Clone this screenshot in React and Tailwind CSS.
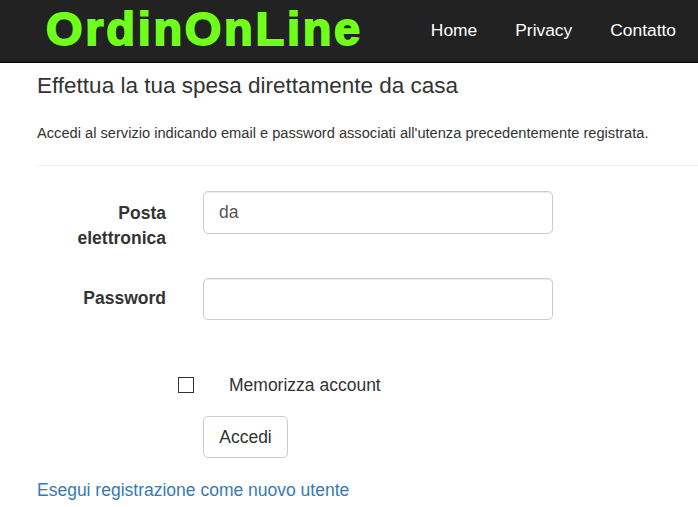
export default function App() {
  return (
    <div className="h-[507px] w-[698px] overflow-hidden bg-white text-[#333] font-['Liberation_Sans',Arial,sans-serif]">
      <nav className="flex h-[63px] items-center justify-between border-b border-[#080808] bg-[#222222] pl-[46px] pr-[22px]">
        <div className="text-[47px] font-bold leading-none tracking-[2.7px] text-[#6fff1a] pb-[6px] [-webkit-text-stroke:1.8px_#6fff1a]">OrdinOnLine</div>
        <div className="flex gap-[38px] pb-[2px] text-[17.4px] text-white">
          <span>Home</span>
          <span>Privacy</span>
          <span>Contatto</span>
        </div>
      </nav>
      <main className="pl-[37px]">
        <h2 className="mt-[9px] text-[22.5px] leading-[28px]">Effettua la tua spesa direttamente da casa</h2>
        <p className="mt-[23px] text-[14.65px] leading-[20px] whitespace-nowrap">Accedi al servizio indicando email e password associati all'utenza precedentemente registrata.</p>
        <hr className="mt-[22px] border-t border-[#eeeeee]" />
        <div className="mt-[25px] flex">
          <label className="w-[129px] pt-[9.5px] text-right text-[17.5px] font-bold leading-[25.5px]">Posta elettronica</label>
          <div className="ml-[37px] flex h-[43px] w-[350px] items-center rounded-[5px] border border-[#cccccc] px-[15px] text-[17.5px] text-[#555] shadow-[inset_0_1px_1px_rgba(0,0,0,0.075)]">da</div>
        </div>
        <div className="mt-[26.5px] flex">
          <label className="w-[129px] pt-[8px] text-right text-[17.5px] font-bold leading-[25px]">Password</label>
          <div className="ml-[37px] h-[42px] w-[350px] rounded-[5px] border border-[#cccccc] shadow-[inset_0_1px_1px_rgba(0,0,0,0.075)]"></div>
        </div>
        <div className="mt-[54px] flex items-center">
          <span className="ml-[141px] h-[16px] w-[16px] border border-[#333]"></span>
          <span className="ml-[35px] text-[17.5px] leading-[22px]">Memorizza account</span>
        </div>
        <button className="ml-[166px] mt-[20px] block h-[42px] w-[85px] rounded-[5px] border border-[#cccccc] bg-white text-[17.5px] text-[#333]">Accedi</button>
        <a className="mt-[21px] block text-[17.5px] leading-[22px] text-[#337ab7]">Esegui registrazione come nuovo utente</a>
      </main>
    </div>
  );
}
